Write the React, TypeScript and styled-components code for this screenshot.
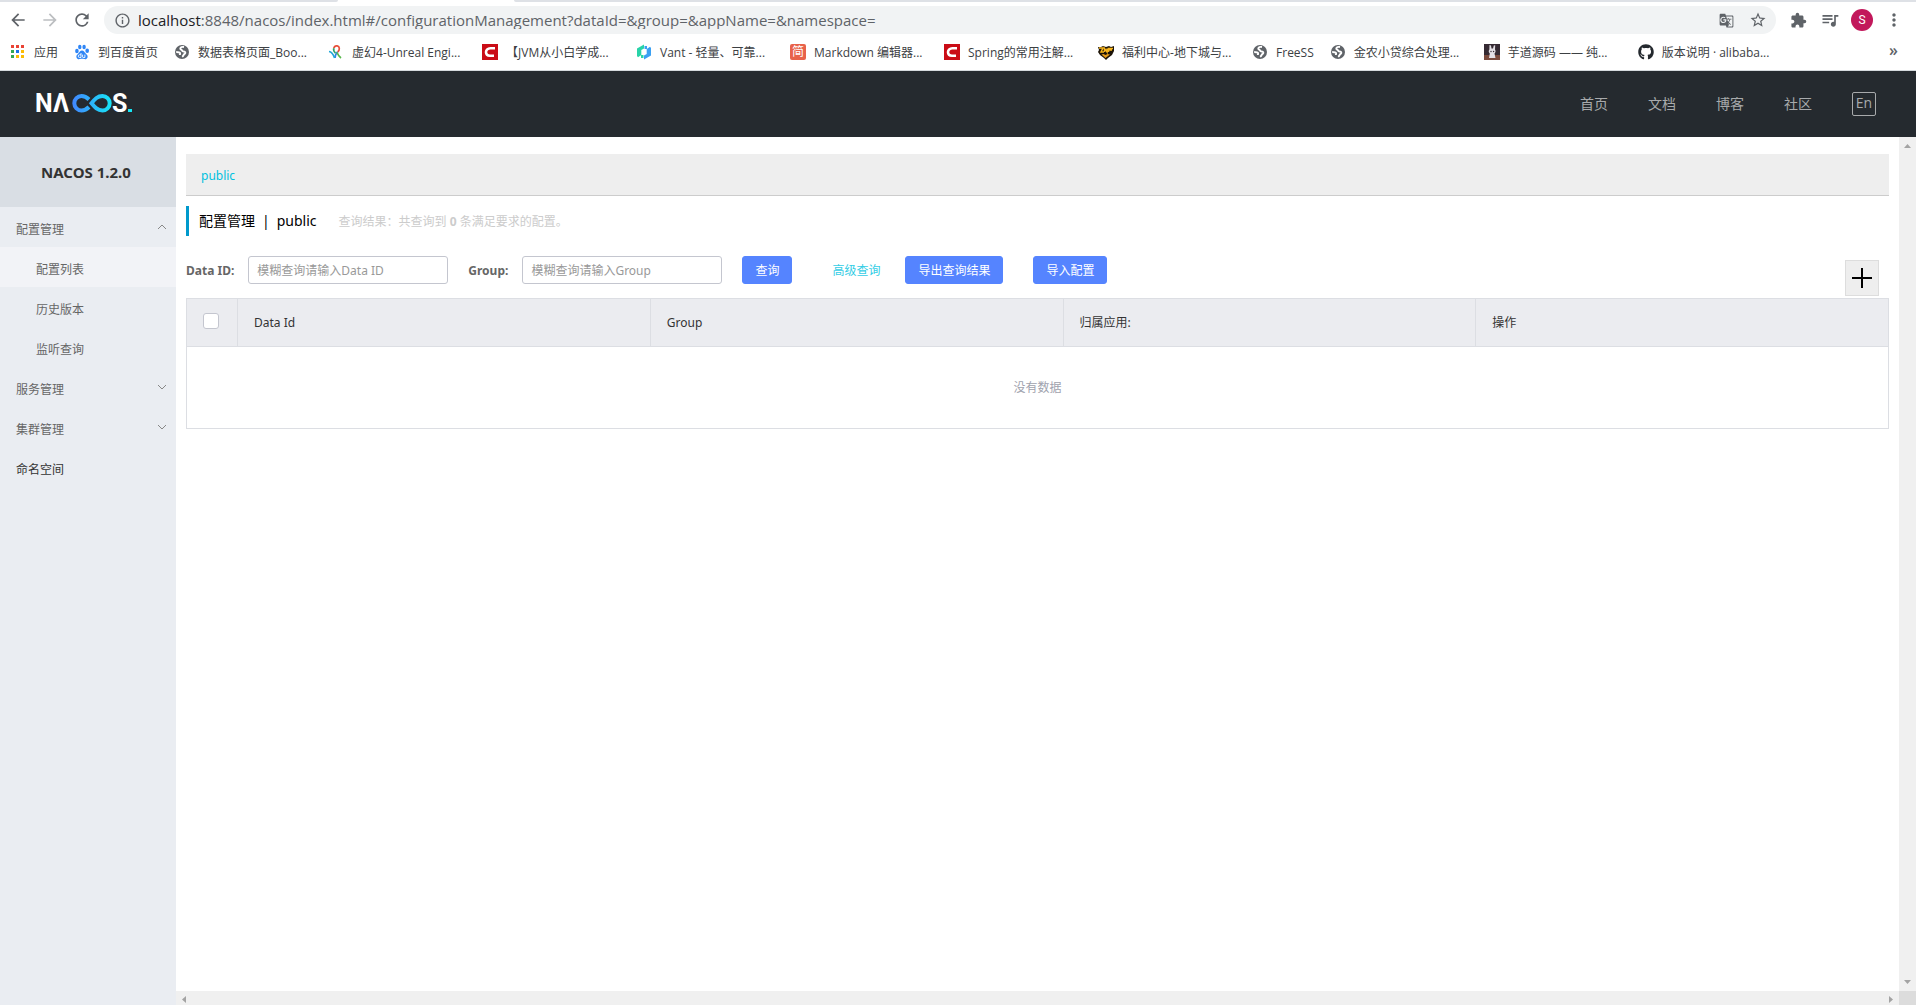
import React, { useState } from "react";
import styled, { createGlobalStyle } from "styled-components";
import {
  MdArrowBack,
  MdArrowForward,
  MdExtension,
  MdGTranslate,
  MdInfoOutline,
  MdMoreVert,
  MdQueueMusic,
  MdRefresh,
  MdStarBorder,
} from "react-icons/md";
import { FaGithub } from "react-icons/fa";

const chromeFont = '"Open Sans", "Noto Sans CJK SC", sans-serif';
const appFont = '"Noto Sans", "Noto Sans CJK SC", sans-serif';

const GlobalStyle = createGlobalStyle`
  *, *::before, *::after { box-sizing: border-box; }
  body { margin: 0; background: #fff; }
  button, input { font: inherit; margin: 0; }
  a { color: inherit; text-decoration: none; }
`;

const Page = styled.div`
  display: flex;
  flex-direction: column;
  height: 100vh;
  overflow: hidden;
  font-family: ${appFont};
  font-size: 12px;
  line-height: 18px;
  color: #333;
`;

/* ---------- browser frame ---------- */

const Browser = styled.div`
  flex: none;
  background: #fff;
  border-bottom: 1px solid #d5dadd;
  font-family: ${chromeFont};
`;

const TabStrip = styled.div`
  display: flex;
  gap: 176px;
  height: 2px;
`;

const TabEdge = styled.div<{ $fill?: boolean }>`
  flex: ${(p) => (p.$fill ? "1" : "0 0 338px")};
  background: #dee1e6;
  border-radius: ${(p) => (p.$fill ? "0 0 0 2px" : "0 0 2px 0")};
`;

const Toolbar = styled.div`
  display: flex;
  align-items: center;
  height: 36px;
  padding: 0 6px 0 2px;
`;

const ToolButton = styled.button<{ $faded?: boolean }>`
  display: flex;
  align-items: center;
  justify-content: center;
  width: 32px;
  height: 28px;
  padding: 0;
  border: 0;
  background: none;
  color: ${(p) => (p.$faded ? "#bcbec1" : "#5f6368")};
`;

const AddressBar = styled.label`
  display: flex;
  flex: 1;
  align-items: center;
  height: 28px;
  margin: 0 6px;
  padding: 0 2px 0 10px;
  border-radius: 14px;
  background: #f1f3f4;
  color: #5f6368;
  font-size: 15px;
`;

const Host = styled.span`
  margin-left: 7px;
  color: #202124;
`;

const AddressInput = styled.input`
  flex: 1;
  min-width: 0;
  padding: 0;
  border: 0;
  outline: 0;
  background: none;
  color: #5f6368;
`;

const Avatar = styled.span`
  width: 22px;
  height: 22px;
  border-radius: 50%;
  background: #c2185b;
  color: #fff;
  font-family: Roboto, sans-serif;
  font-size: 12px;
  line-height: 22px;
  text-align: center;
`;

const Bookmarks = styled.nav`
  display: flex;
  align-items: center;
  gap: 16px;
  height: 32px;
  padding: 0 18px 4px 10px;
`;

const Bookmark = styled.a`
  display: flex;
  align-items: center;
  gap: 8px;
  color: #3c4043;
  white-space: nowrap;
`;

const BookmarkIcon = styled.svg`
  width: 16px;
  height: 16px;
  flex: none;
`;

const BookmarkLabel = styled.span<{ $wide?: boolean }>`
  width: ${(p) => (p.$wide ? "114px" : "auto")};
  padding-top: 2px;
`;

const BadgeIcon = styled.span<{ $round?: boolean; $color: string }>`
  width: 16px;
  height: 16px;
  border-radius: ${(p) => (p.$round ? "2px" : "0")};
  background: ${(p) => p.$color};
  color: #fff;
  font-size: 12px;
  line-height: 16px;
  text-align: center;
`;

const MoreBookmarks = styled.button`
  margin-left: auto;
  padding: 0 0 4px;
  border: 0;
  background: none;
  color: #5f6368;
  font-size: 16px;
  font-weight: 600;
  line-height: 18px;
`;

const AppsIcon = () => (
  <BookmarkIcon viewBox="0 0 16 16">
    {["#ea4335", "#ea4335", "#ea4335", "#34a853", "#1a73e8", "#fbbc04", "#34a853", "#fbbc04", "#fbbc04"].map(
      (c, i) => (
        <rect key={i} x={1 + (i % 3) * 5} y={1 + Math.floor(i / 3) * 5} width="3" height="3" fill={c} />
      ),
    )}
  </BookmarkIcon>
);

const PawIcon = () => (
  <BookmarkIcon viewBox="0 0 16 16" fill="#2f86f6">
    <ellipse cx="2.9" cy="7" rx="1.8" ry="2.3" />
    <ellipse cx="5.8" cy="3" rx="1.7" ry="2.3" />
    <ellipse cx="10.1" cy="3" rx="1.7" ry="2.3" />
    <ellipse cx="13.2" cy="6.8" rx="1.8" ry="2.2" />
    <path d="M8 6.6c1.9 0 2.4 1.7 3.7 2.9 1.4 1.2 2.3 2.3 1.8 3.9-.6 1.800-2.100 1.900-3.400 1.600-1.400-.3-2.800-.3-4.200 0-1.300.3-2.800.2-3.400-1.600-.5-1.600.4-2.700 1.800-3.900C5.600 8.300 6.100 6.600 8 6.600z" />
    <g fill="none" stroke="#fff" strokeWidth=".9">
      <path d="M7 9v4.500H5.600a1.300 1.300 0 0 1 0-2.700H7" />
      <path d="M8.600 10.600v2.300q0 .6.600.600h1.700v-2.900" />
    </g>
  </BookmarkIcon>
);

const GlobeIcon = () => (
  <BookmarkIcon viewBox="0 0 16 16">
    <circle cx="8" cy="8" r="7" fill="#5f6368" />
    <path
      d="M10 3C8 2.600 6.300 3.300 6.300 4.500c0 1.300 1.500 1 1.900 2.200.3 1.100 1.800.5 2.600 1 1 .6.500 2-.5 2.500-.9.500-.8 1.800-2.200 2.600M2.200 8c1.500 0 3.500.2 3.900 1.200.3.900-.4 1-.3 1.800"
      fill="none"
      stroke="#fff"
      strokeWidth="1.900"
    />
  </BookmarkIcon>
);

const RibbonIcon = () => (
  <BookmarkIcon viewBox="0 0 16 16" fill="none" strokeWidth="1.700">
    <path d="M5.800 4.200C6.300 2.300 7.700 1.600 9.200 1.900c2.600.5 2.900 4.100.4 6.100" stroke="#e8503a" />
    <path d="M9.600 8C7.500 9.600 7.300 11.500 7 14" stroke="#2f86e8" />
    <path d="M1 7.500c2 .2 4 2 5.600 6.500" stroke="#22a7d8" />
    <path d="M9 8.500c1 2.500 2 4 4 5.500" stroke="#58b84c" />
    <path d="M7.500 9C5.800 7.500 5.300 6 5.800 4.200" stroke="#2ca36b" />
  </BookmarkIcon>
);

const VantIcon = () => (
  <BookmarkIcon viewBox="0 0 16 16">
    <path d="M8 .5v4L5.300 6v5L2 13.200 1 12V4.500z" fill="#28d3a8" />
    <path d="M5 11h2.500v3H5z" fill="#28d3a8" />
    <path d="M8 15.500v-4L10.700 10V5L14 2.800l1 1.200v7.500z" fill="#3aa0f3" />
    <path d="M8.500 2H11v3H8.500z" fill="#3aa0f3" />
  </BookmarkIcon>
);

const CrestIcon = () => (
  <BookmarkIcon viewBox="0 0 16 16">
    <path d="M0 3l3 0 2-1 3 1 3-1 2 1 3-1v5l-2 4-4 3-2 2-2-2-4-3-2-3 1-2z" fill="#1d1408" />
    <path d="M1 4h4L3 8h3M6.500 8V4.500L9 8V4.500M10.500 8V4.500H15M10.500 6H14" fill="none" stroke="#f6b41c" strokeWidth="1.500" />
    <path d="M3.500 10.500l4 3.500 4.500-3.500-2.500-.5-2 1-2-1z" fill="#e39a1b" />
  </BookmarkIcon>
);

const BunnyIcon = () => (
  <BookmarkIcon viewBox="0 0 16 16">
    <rect width="16" height="16" fill="#352a33" />
    <rect y="11" width="16" height="5" fill="#7a4a3d" />
    <path d="M5.500 1l1.500.5.500 3h1.500l.8-3 1.400-.3-.2 4.300c.8 1.200.8 3-.5 4l1 4.500H5l.8-4.500c-1.300-1-1.400-2.800-.4-4z" fill="#e4e0e6" />
    <circle cx="7" cy="7.500" r=".7" fill="#352a33" />
    <circle cx="9.600" cy="7.500" r=".7" fill="#352a33" />
  </BookmarkIcon>
);

const CLetterIcon = () => (
  <BookmarkIcon viewBox="0 0 16 16">
    <rect width="16" height="16" fill="#ca0c16" />
    <path d="M13 4.200H8.500Q4.300 4.400 4 8q0 3.700 4 3.800h4" fill="none" stroke="#fff" strokeWidth="2.600" />
  </BookmarkIcon>
);

const bookmarks: { label: string; icon: React.ReactNode; wide?: boolean }[] = [
  { label: "应用", icon: <AppsIcon /> },
  { label: "到百度首页", icon: <PawIcon /> },
  { label: "数据表格页面_Boo...", icon: <GlobeIcon />, wide: true },
  { label: "虚幻4-Unreal Engi...", icon: <RibbonIcon />, wide: true },
  { label: "【JVM从小白学成...", icon: <CLetterIcon />, wide: true },
  { label: "Vant - 轻量、可靠...", icon: <VantIcon />, wide: true },
  { label: "Markdown 编辑器...", icon: <BadgeIcon $round $color="#e8624a">简</BadgeIcon>, wide: true },
  { label: "Spring的常用注解...", icon: <CLetterIcon />, wide: true },
  { label: "福利中心-地下城与...", icon: <CrestIcon />, wide: true },
  { label: "FreeSS", icon: <GlobeIcon /> },
  { label: "金农小贷综合处理...", icon: <GlobeIcon />, wide: true },
  { label: "芋道源码 —— 纯...", icon: <BunnyIcon />, wide: true },
  { label: "版本说明 · alibaba...", icon: <FaGithub size={16} color="#24292e" />, wide: true },
];

/* ---------- application header ---------- */

const Header = styled.header`
  display: flex;
  flex: none;
  align-items: center;
  justify-content: space-between;
  height: 66px;
  padding: 0 40px 0 32px;
  background: #252a2f;
`;

const Logo = styled.svg`
  width: 104px;
  height: 44px;
  font-family: Roboto, sans-serif;
  font-size: 25px;
  font-weight: 700;
`;

const HeaderNav = styled.nav`
  display: flex;
  align-items: center;
  gap: 40px;
  color: #a8aaac;
  font-size: 14px;
  line-height: 20px;
`;

const LanguageButton = styled.button`
  width: 24px;
  height: 24px;
  padding: 0 0 2px;
  border: 1px solid #a8aaac;
  border-radius: 2px;
  background: none;
  color: inherit;
  font-family: ${chromeFont};
  line-height: 20px;
`;

/* ---------- sidebar ---------- */

const Body = styled.div`
  display: flex;
  flex: 1;
  min-height: 0;
`;

const Sidebar = styled.aside`
  flex: 0 0 176px;
  background: #eaedf2;
`;

const Version = styled.h1`
  height: 70px;
  margin: 0;
  padding-right: 4px;
  background: #d9dee4;
  font-size: 15px;
  line-height: 70px;
  text-align: center;
`;

const MenuItem = styled.a<{ $nested?: boolean; $active?: boolean; $strong?: boolean }>`
  display: flex;
  align-items: center;
  justify-content: space-between;
  height: 40px;
  padding: 6px 9px 0 ${(p) => (p.$nested ? 36 : 16)}px;
  background: ${(p) => (p.$active ? "#f2f3f7" : "transparent")};
  color: ${(p) => (p.$strong ? "#333" : "#666")};
`;

const Chevron = styled.svg<{ $up?: boolean }>`
  width: 10px;
  height: 10px;
  margin-bottom: 6px;
  transform: ${(p) => (p.$up ? "rotate(180deg)" : "none")};
`;

/* ---------- content ---------- */

const Main = styled.div`
  display: grid;
  flex: 1;
  grid-template-columns: 1fr 17px;
  grid-template-rows: 1fr 14px;
  min-width: 0;
`;

const Content = styled.main`
  min-width: 0;
  padding: 17px 10px 0;
`;

const ScrollTrack = styled.div<{ $horizontal?: boolean }>`
  display: flex;
  flex-direction: ${(p) => (p.$horizontal ? "row" : "column")};
  align-items: center;
  justify-content: space-between;
  padding: ${(p) => (p.$horizontal ? "3px 6px 0" : "7px 0")};
  background: #f0f0f0;
`;

const ScrollCorner = styled.div`
  background: #dcdcdc;
`;

const Arrow = styled.svg`
  flex: none;
  fill: #a3a3a3;
`;

const NamespaceBar = styled.div`
  height: 42px;
  padding: 3px 15px 0;
  border-bottom: 1px solid #ccc;
  background: #eee;
  color: #00c1de;
  line-height: 38px;
`;

const TitleRow = styled.div`
  display: flex;
  align-items: center;
  height: 30px;
  margin: 10px 0 20px;
  padding-left: 10px;
  border-left: 3px solid #09c;
`;

const Title = styled.h2`
  display: flex;
  gap: 7px;
  margin: 0;
  color: #000;
  font-size: 14px;
  font-weight: 400;
  line-height: 20px;
`;

const Result = styled.span`
  margin-left: 22px;
  padding-top: 2px;
  color: #ccc;
`;

const SearchForm = styled.form`
  display: flex;
  height: 40px;
  margin-bottom: 2px;
`;

const Label = styled.label`
  margin-right: 14px;
  color: #666;
  font-weight: 700;
  line-height: 30px;
`;

const TextInput = styled.input`
  width: 200px;
  height: 28px;
  margin-right: 20px;
  padding: 0 8px;
  border: 1px solid #c4c6cf;
  border-radius: 3px;
  outline: 0;
  color: #333;

  &::placeholder {
    color: #999;
    opacity: 1;
  }
`;

const PrimaryButton = styled.button`
  height: 28px;
  padding: 2px 12px 0;
  border: 1px solid #5584ff;
  border-radius: 3px;
  background: #5584ff;
  color: #fff;
`;

const AdvancedLink = styled.a`
  margin: 0 25px 0 40px;
  color: #33cde5;
  line-height: 30px;
`;

const ButtonGroup = styled.div`
  display: flex;
  gap: 30px;
`;

const AddButton = styled.button`
  display: flex;
  align-items: center;
  align-self: flex-end;
  justify-content: center;
  width: 34px;
  height: 36px;
  margin: 0 10px 0 auto;
  padding: 0;
  border: 1px solid #ddd;
  background: #eee;
`;

const Table = styled.table`
  width: 100%;
  border: 1px solid #dcdee3;
  border-collapse: collapse;
  table-layout: fixed;
`;

const HeadCell = styled.th<{ $check?: boolean }>`
  width: ${(p) => (p.$check ? "51px" : "auto")};
  height: 48px;
  padding: 0 16px;
  border: 1px solid #dcdee3;
  background: #ebecf0;
  font-weight: 400;
  text-align: left;
`;

const Checkbox = styled.input`
  display: block;
  width: 16px;
  height: 16px;
  margin-bottom: 3px;
  appearance: none;
  border: 1px solid #c4c6cf;
  border-radius: 3px;
  background: #fff;
`;

const EmptyCell = styled.td`
  height: 82px;
  padding: 0;
  color: #a0a2ad;
  text-align: center;
`;

const ChevronIcon = ({ up }: { up?: boolean }) => (
  <Chevron $up={up} viewBox="0 0 10 10" fill="none" stroke="#888">
    <path d="M1 3l4 4 4-4" />
  </Chevron>
);

const columns = ["Data Id", "Group", "归属应用:", "操作"];

export default function App() {
  const [address, setAddress] = useState(
    ":8848/nacos/index.html#/configurationManagement?dataId=&group=&appName=&namespace=",
  );
  return (
    <Page>
      <GlobalStyle />
      <Browser>
        <TabStrip>
          <TabEdge />
          <TabEdge $fill />
        </TabStrip>
        <Toolbar>
          <ToolButton aria-label="后退"><MdArrowBack size={20} /></ToolButton>
          <ToolButton aria-label="前进" $faded><MdArrowForward size={20} /></ToolButton>
          <ToolButton aria-label="刷新"><MdRefresh size={20} /></ToolButton>
          <AddressBar>
            <MdInfoOutline size={17} />
            <Host>localhost</Host>
            <AddressInput aria-label="地址" value={address} onChange={(e) => setAddress(e.target.value)} />
            <ToolButton aria-label="翻译"><MdGTranslate size={15} /></ToolButton>
            <ToolButton aria-label="收藏"><MdStarBorder size={18} /></ToolButton>
          </AddressBar>
          <ToolButton aria-label="扩展程序"><MdExtension size={17} /></ToolButton>
          <ToolButton aria-label="媒体"><MdQueueMusic size={20} /></ToolButton>
          <ToolButton aria-label="用户"><Avatar>S</Avatar></ToolButton>
          <ToolButton aria-label="菜单"><MdMoreVert size={20} /></ToolButton>
        </Toolbar>
        <Bookmarks>
          {bookmarks.map((b) => (
            <Bookmark key={b.label} href="#">
              {b.icon}
              <BookmarkLabel $wide={b.wide}>{b.label}</BookmarkLabel>
            </Bookmark>
          ))}
          <MoreBookmarks>»</MoreBookmarks>
        </Bookmarks>
      </Browser>

      <Header>
        <Logo viewBox="-4 -12 104 44" role="img" aria-label="NACOS">
          <defs>
            <linearGradient id="loop" x1="36" y1="0" x2="76" y2="0" gradientUnits="userSpaceOnUse">
              <stop offset="0" stopColor="#4285ff" />
              <stop offset="1" stopColor="#16e6f5" />
            </linearGradient>
          </defs>
          <text x="-1" y="18" fill="#fff">N</text>
          <text x="17" y="18" fill="#fff">Λ</text>
          <g fill="none" stroke="url(#loop)" strokeWidth="4">
            <path d="M53 5.500C50.500 3 48.300 2 45.500 2a7.200 7.200 0 0 0 0 14.400c3 0 5.200-1 7.500-3.400" />
            <path d="M55.500 9.200C59 5 61.500 2 66.500 2a7.200 7.200 0 0 1 0 14.400c-5 0-7.500-3-11-7.200z" />
          </g>
          <text x="76" y="18" fill="#fff">S</text>
          <rect x="92" y="15" width="4" height="3" fill="#16e6f5" />
        </Logo>
        <HeaderNav>
          <a href="#">首页</a>
          <a href="#">文档</a>
          <a href="#">博客</a>
          <a href="#">社区</a>
          <LanguageButton>En</LanguageButton>
        </HeaderNav>
      </Header>

      <Body>
        <Sidebar>
          <Version>NACOS 1.2.0</Version>
          <nav>
            <MenuItem href="#">配置管理<ChevronIcon up /></MenuItem>
            <MenuItem href="#" $nested $active>配置列表</MenuItem>
            <MenuItem href="#" $nested>历史版本</MenuItem>
            <MenuItem href="#" $nested>监听查询</MenuItem>
            <MenuItem href="#">服务管理<ChevronIcon /></MenuItem>
            <MenuItem href="#">集群管理<ChevronIcon /></MenuItem>
            <MenuItem href="#" $strong>命名空间</MenuItem>
          </nav>
        </Sidebar>

        <Main>
          <Content>
            <NamespaceBar><a href="#">public</a></NamespaceBar>
            <TitleRow>
              <Title>
                <span>配置管理</span>
                <span>|</span>
                <span>public</span>
              </Title>
              <Result>查询结果：共查询到 <strong>0</strong> 条满足要求的配置。</Result>
            </TitleRow>
            <SearchForm onSubmit={(e) => e.preventDefault()}>
              <Label htmlFor="dataId">Data ID:</Label>
              <TextInput id="dataId" placeholder="模糊查询请输入Data ID" />
              <Label htmlFor="group">Group:</Label>
              <TextInput id="group" placeholder="模糊查询请输入Group" />
              <PrimaryButton type="submit">查询</PrimaryButton>
              <AdvancedLink href="#">高级查询</AdvancedLink>
              <ButtonGroup>
                <PrimaryButton type="button">导出查询结果</PrimaryButton>
                <PrimaryButton type="button">导入配置</PrimaryButton>
              </ButtonGroup>
              <AddButton type="button" aria-label="新建配置">
                <svg width="20" height="20" stroke="#000" strokeWidth="2">
                  <path d="M0 10h20M10 0v20" />
                </svg>
              </AddButton>
            </SearchForm>
            <Table>
              <thead>
                <tr>
                  <HeadCell $check><Checkbox type="checkbox" aria-label="全选" /></HeadCell>
                  {columns.map((c) => (
                    <HeadCell key={c}>{c}</HeadCell>
                  ))}
                </tr>
              </thead>
              <tbody>
                <tr>
                  <EmptyCell colSpan={5}>没有数据</EmptyCell>
                </tr>
              </tbody>
            </Table>
          </Content>
          <ScrollTrack>
            <Arrow width="7" height="4"><path d="M0 4L3.500 0L7 4z" /></Arrow>
            <Arrow width="7" height="4"><path d="M0 0L3.500 4L7 0z" /></Arrow>
          </ScrollTrack>
          <ScrollTrack $horizontal>
            <Arrow width="4" height="7"><path d="M4 0L0 3.500L4 7z" /></Arrow>
            <Arrow width="4" height="7"><path d="M0 0L4 3.500L0 7z" /></Arrow>
          </ScrollTrack>
          <ScrollCorner />
        </Main>
      </Body>
    </Page>
  );
}
